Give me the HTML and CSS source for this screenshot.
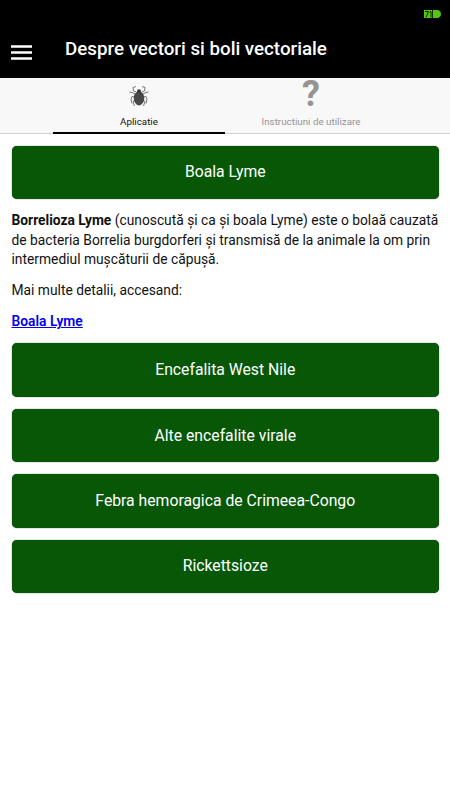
FILE: index.html
```html
<!DOCTYPE html>
<html lang="ro">
<head>
  <meta charset="utf-8">
  <title>Despre vectori si boli vectoriale</title>
  <link rel="stylesheet" href="styles.css">
</head>
<body>
  <header class="header">
    <div class="status">
      <svg width="17" height="8" viewBox="0 0 17 8">
        <path fill="#55c513" d="M0 0h13c2.500 0 4 2 4 4s-1.500 4-4 4H0z"/>
        <path fill="none" stroke="#0b2a00" d="M1 1.500h3.500L2 7.500M5.500 2.500l1.500-1v6M8.500 0v8"/>
      </svg>
    </div>
    <div class="toolbar">
      <button class="menu-btn">
        <svg width="21" height="15" viewBox="0 0 21 15">
          <path stroke="#fff" stroke-width="2.400" d="M0 1.500h21M0 7.500h21M0 13.500h21"/>
        </svg>
      </button>
      <h1 class="title">Despre vectori si boli vectoriale</h1>
    </div>
  </header>

  <nav class="tabs">
    <a class="tab active">
      <svg class="tab-icon" width="20" height="22" viewBox="0 0 20 22">
        <g fill="none" stroke="#555" stroke-width="0.800">
          <path d="M7 6L4.500 5L4 1.500L7 0.500M13 6L15.500 5L16 1.500L13 0.500"/>
          <path d="M6 8L3 6.500L0.500 6M14 8L17 6.500L19.500 6"/>
          <path d="M5.500 11L3 10.500L2 13L3 17.500M14.500 11L17 10.500L18 13L17 17.500"/>
          <path d="M6 14L4 15.500L5.500 20M14 14L16 15.500L14.500 20"/>
        </g>
        <path fill="#333" d="M8.500 3.500h3L12 6H8z"/>
        <ellipse cx="10" cy="12.300" rx="4.800" ry="6.700" fill="#484848" stroke="#292929" stroke-width="0.700"/>
      </svg>
      <span class="tab-label">Aplicatie</span>
    </a>
    <a class="tab">
      <span class="tab-icon question">?</span>
      <span class="tab-label">Instructiuni de utilizare</span>
    </a>
  </nav>

  <main class="content">
    <button class="btn">Boala Lyme</button>
    <div class="details">
      <p><b>Borrelioza Lyme</b> (cunoscută și ca și boala Lyme) este o bolaă cauzată<br>de bacteria Borrelia burgdorferi și transmisă de la animale la om prin<br>intermediul mușcăturii de căpușă.</p>
      <p>Mai multe detalii, accesand:</p>
      <p><a class="link" href="#">Boala Lyme</a></p>
    </div>
    <button class="btn">Encefalita West Nile</button>
    <button class="btn">Alte encefalite virale</button>
    <button class="btn">Febra hemoragica de Crimeea-Congo</button>
    <button class="btn">Rickettsioze</button>
  </main>
</body>
</html>
```
FILE: styles.css
```css
body {
  margin: 0;
  background-color: #fff;
  color: #111;
  font-family: Roboto, sans-serif;
}

button {
  border: none;
  font-family: inherit;
}

.header {
  height: 78px;
  background-color: #000;
}

.status {
  display: flex;
  justify-content: flex-end;
  height: 18px;
  padding: 10px 9px 0 0;
}

.toolbar {
  display: flex;
  align-items: flex-start;
  padding-left: 11px;
}

.menu-btn {
  display: flex;
  width: 21px;
  margin: 17px 33px 0 0;
  padding: 0;
  background-color: transparent;
}

.title {
  margin: 10px 0 0;
  color: #fff;
  font-size: 18.75px;
  font-weight: 500;
  line-height: 22px;
  white-space: nowrap;
}

.tabs {
  display: flex;
  justify-content: center;
  height: 55px;
  border-bottom: 1px solid #cfcfcf;
  background-color: #f8f8f8;
}

.tab {
  display: flex;
  flex-direction: column;
  align-items: center;
  box-sizing: border-box;
  width: 172px;
  height: 56px;
  color: #949494;
}

.tab.active {
  border-bottom: 2px solid #000;
  color: #111;
}

.tab-icon {
  height: 22px;
  margin-top: 8px;
}

.question {
  height: 30px;
  margin-top: 0;
  font-size: 36px;
  font-weight: 700;
  line-height: 32px;
}

.tab-label {
  margin-top: 6px;
  font-size: 9.8px;
  line-height: 15px;
  white-space: nowrap;
}

.content {
  padding: 11.5px 11px 0 11.5px;
}

.btn {
  display: block;
  width: 100%;
  height: 53.5px;
  margin-bottom: 11.9px;
  padding: 0 0 1px;
  border-radius: 5px;
  background-color: #075707;
  box-shadow: 0 0 1px #000;
  color: #fff;
  font-size: 15.75px;
}

.details {
  padding-top: 0.4px;
  font-size: 13.8px;
  line-height: 19.6px;
}

.details p {
  margin: 0 0 11.4px;
  white-space: nowrap;
}

.link {
  color: #0000ee;
  font-weight: 600;
}
```
